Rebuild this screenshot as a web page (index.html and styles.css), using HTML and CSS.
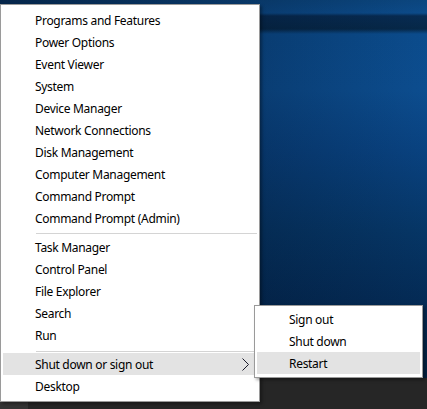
FILE: index.html
```html
<!DOCTYPE html>
<html lang="en">
<head>
    <meta charset="UTF-8">
    <title>Quick Link Menu</title>
    <link rel="stylesheet" href="styles.css">
</head>
<body>
    <div class="desktop">
        <div class="wallpaper"></div>
        <div class="taskbar">
            <span class="start-btn"></span>
        </div>

        <!-- win+x menu -->
        <ul class="menu main-menu">
            <li>Programs and Features</li>
            <li>Power Options</li>
            <li>Event Viewer</li>
            <li>System</li>
            <li>Device Manager</li>
            <li>Network Connections</li>
            <li>Disk Management</li>
            <li>Computer Management</li>
            <li>Command Prompt</li>
            <li>Command Prompt (Admin)</li>
            <li class="sep"></li>
            <li>Task Manager</li>
            <li>Control Panel</li>
            <li>File Explorer</li>
            <li>Search</li>
            <li>Run</li>
            <li class="sep sep2"></li>
            <li class="active">Shut down or sign out
                <svg class="chevron" width="7" height="13" viewBox="0 0 7 13">
                    <polyline points="0.5,0.5 6.5,6.5 0.5,12.5" fill="none" stroke="#1a1a2a" stroke-width="1"/>
                </svg>
            </li>
            <li>Desktop</li>
        </ul>

        <!-- shut down submenu -->
        <ul class="menu sub-menu">
            <li>Sign out</li>
            <li>Shut down</li>
            <li class="active">Restart</li>
        </ul>
    </div>
</body>
</html>
```

FILE: styles.css
```css
*{
    margin: 0;
    padding: 0;
    box-sizing: border-box;
}
body{
    width: 427px;
    height: 409px;
    overflow: hidden;
    font-family: "Noto Sans", "Open Sans", sans-serif;
    font-size: 12px;
    color: #000;
}
.desktop{
    position: relative;
    width: 100%;
    height: 100%;
    display: flex;
    flex-direction: column;
}
.wallpaper{
    flex: 1;
    background:
        linear-gradient(to right, rgba(2, 12, 30, 0.55) 0, rgba(2, 12, 30, 0.25) 60%, rgba(2, 12, 30, 0) 100%),
        linear-gradient(to bottom,
            #0b467f 0, #0c4b8a 13px, #072b52 16px, #062848 29px,
            #0b4c8d 34px, #0c4d8f 90px, #094280 150px,
            #063666 230px, #042b56 300px, #03203f 378px);
}
.taskbar{
    height: 31px;
    background: #262626;
    display: flex;
}
.start-btn{
    width: 28px;
    background: #343434;
}
.menu{
    position: absolute;
    list-style: none;
    background: #fff;
    border: 1px solid #9a9a9a;
    box-shadow: 2px 2px 3px rgba(0, 0, 0, 0.35);
}
.menu>li{
    height: 22px;
    margin: 0 2px;
    display: flex;
    align-items: center;
    white-space: nowrap;
    letter-spacing: -0.3px;
}
.menu>li.active{
    background: #e3e3e3;
}
.main-menu{
    left: 0;
    top: 4px;
    width: 260px;
    height: 398px;
    padding: 4px 0;
}
.main-menu>li{
    padding-left: 32px;
}
.main-menu>li.sep{
    height: 1px;
    margin: 4px 2px 2px 35px;
    padding: 0;
    background: #d4d4d4;
}
.main-menu>li.sep2{
    margin-top: 5px;
    margin-bottom: 1px;
}
.chevron{
    margin-left: auto;
    margin-right: 8px;
}
.sub-menu{
    left: 254px;
    top: 305px;
    width: 169px;
    height: 73px;
    padding: 2px 0;
}
.sub-menu>li{
    padding-left: 32px;
}
```
